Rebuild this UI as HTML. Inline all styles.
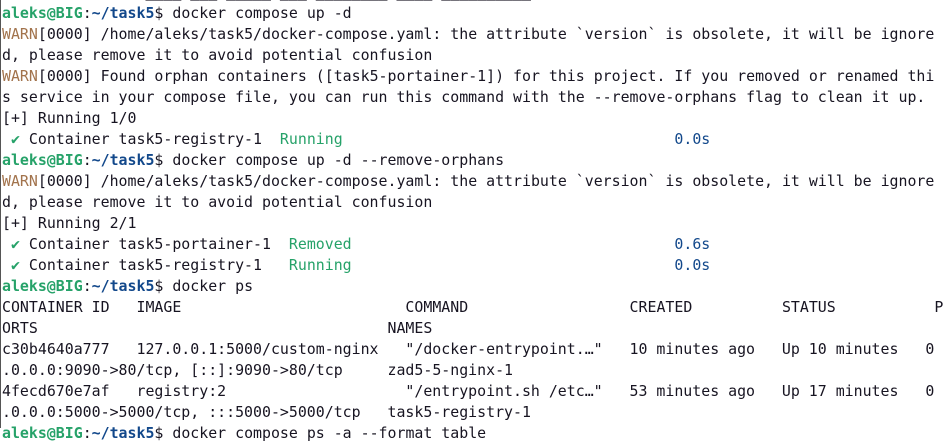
<!DOCTYPE html>
<html><head><meta charset="utf-8"><style>
html,body{margin:0;padding:0;background:#fff;width:945px;height:428px;overflow:hidden}
body{border-left:1px solid #555;box-sizing:border-box}
pre{position:absolute;left:2px;top:-18px;margin:0;font-family:"DejaVu Sans Mono","Liberation Mono",monospace;font-size:14.9px;line-height:21px;color:#171421;white-space:pre}
.g{color:#26a269;font-weight:bold}.b{color:#12488b;font-weight:bold}
.w{color:#a2734c}.gr{color:#26a269}.bl{color:#12488b}
.c{display:inline-block;overflow:hidden;vertical-align:top;height:21px}
</style></head><body><pre>[+] Running 1/1 ____ ___ _____ ___ ________ ____ __________
<span class="g">aleks@BIG</span>:<span class="b">~/task5</span>$ docker compose up -d
<span class="w">WARN</span>[0000] /home/aleks/task5/docker-compose.yaml: the attribute `version` is obsolete, it will be ignore
d, please remove it to avoid potential confusion
<span class="w">WARN</span>[0000] Found orphan containers ([task5-portainer-1]) for this project. If you removed or renamed thi
s service in your compose file, you can run this command with the --remove-orphans flag to clean it up.
[+] Running 1/0
 <span class="gr">✔</span> Container task5-registry-1  <span class="gr">Running</span>                                     <span class="bl">0.0s</span>
<span class="g">aleks@BIG</span>:<span class="b">~/task5</span>$ docker compose up -d --remove-orphans
<span class="w">WARN</span>[0000] /home/aleks/task5/docker-compose.yaml: the attribute `version` is obsolete, it will be ignore
d, please remove it to avoid potential confusion
[+] Running 2/1
 <span class="gr">✔</span> Container task5-portainer-1  <span class="gr">Removed</span>                                    <span class="bl">0.6s</span>
 <span class="gr">✔</span> Container task5-registry-1   <span class="gr">Running</span>                                    <span class="bl">0.0s</span>
<span class="g">aleks@BIG</span>:<span class="b">~/task5</span>$ docker ps
CONTAINER ID   IMAGE                         COMMAND                  CREATED          STATUS           P
ORTS                                       NAMES
<span class="c" style="width:45ch">c30b4640a777   127.0.0.1:5000/custom-nginx</span><span class="c" style="width:25ch">"/docker-entrypoint.…"</span><span class="c" style="width:17ch">10 minutes ago</span><span class="c" style="width:16ch">Up 10 minutes</span>0
.0.0.0:9090->80/tcp, [::]:9090->80/tcp     zad5-5-nginx-1
<span class="c" style="width:45ch">4fecd670e7af   registry:2</span><span class="c" style="width:25ch">"/entrypoint.sh /etc…"</span><span class="c" style="width:17ch">53 minutes ago</span><span class="c" style="width:16ch">Up 17 minutes</span>0
.0.0.0:5000->5000/tcp, :::5000->5000/tcp   task5-registry-1
<span class="g">aleks@BIG</span>:<span class="b">~/task5</span>$ docker compose ps -a --format table
</pre></body></html>
